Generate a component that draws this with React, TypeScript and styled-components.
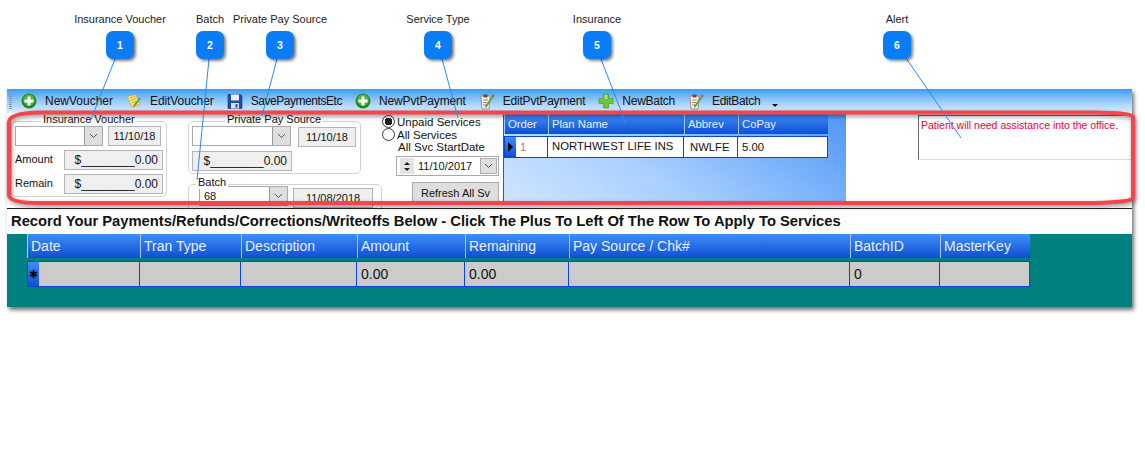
import styled, { createGlobalStyle } from 'styled-components';

const GlobalStyle = createGlobalStyle`
	html, body {
		margin: 0;
		padding: 0;
		background: #fff;
	}
	body {
		font-family: 'Liberation Sans', Arial, sans-serif;
		color: #111;
	}
`;

const Page = styled.div`
	position: relative;
	width: 1145px;
	height: 476px;
	padding: 89px 0 0 7px;
	box-sizing: border-box;
	overflow: hidden;
`;

const Window = styled.div`
	width: 1125px;
	height: 218px;
	display: flex;
	flex-direction: column;
	background: #fff;
	box-shadow: 2px 3px 4px rgba(0, 0, 0, 0.55);
`;

const Toolbar = styled.div`
	display: flex;
	align-items: center;
	flex: 0 0 24px;
	gap: 13px;
	font-size: 12px;
	background: linear-gradient(#3f9bf6, #8fc6f8 45%, #e2f0fc);
`;

const Gripper = styled.div`
	width: 3px;
	height: 15px;
	margin: 0 -4px 0 2px;
	background: repeating-linear-gradient(#7f97ad 0 1px, transparent 1px 2px);
`;

const ToolItem = styled.div<{ $tracking: number }>`
	display: flex;
	align-items: center;
	gap: 8px;
	letter-spacing: ${(p) => p.$tracking}px;
	white-space: nowrap;
`;

const Caret = styled.div`
	width: 0;
	height: 0;
	margin: 8px 0 0 -1px;
	border: 3px solid transparent;
	border-top-color: #111;
	border-bottom-width: 0;
`;

const Panel = styled.div`
	display: flex;
	flex: 0 0 96px;
	overflow: hidden;
	font-size: 11px;
	border-bottom: 1px solid #222;
	box-sizing: border-box;
`;

const FormArea = styled.div`
	display: flex;
	flex: 0 0 496px;
	padding-left: 4px;
	box-sizing: border-box;
`;

const Column = styled.div<{ $width: number; $gap?: number }>`
	display: flex;
	flex-direction: column;
	flex: 0 0 ${(p) => p.$width}px;
	width: ${(p) => p.$width}px;
	margin-left: ${(p) => p.$gap ?? 0}px;
`;

const Group = styled.div<{ $width: number; $height: number; $top: number; $padTop?: number }>`
	position: relative;
	flex: 0 0 auto;
	display: flex;
	flex-direction: column;
	gap: 4px;
	width: ${(p) => p.$width}px;
	height: ${(p) => p.$height}px;
	margin-top: ${(p) => p.$top}px;
	padding: ${(p) => p.$padTop ?? 4}px 3px 0;
	border: 1px solid #d2d2d2;
	border-radius: 5px;
	box-sizing: border-box;
`;

const Legend = styled.span<{ $left: number }>`
	position: absolute;
	top: -9px;
	left: ${(p) => p.$left}px;
	padding: 0 2px;
	line-height: 13px;
	background: #fff;
	white-space: nowrap;
`;

const Row = styled.div<{ $indent?: number; $gap?: number }>`
	display: flex;
	align-items: flex-start;
	gap: ${(p) => p.$gap ?? 5}px;
	padding-left: ${(p) => p.$indent ?? 0}px;
`;

const FieldLabel = styled.span`
	flex: 0 0 44px;
	line-height: 18px;
`;

const Combo = styled.div<{ $width: number }>`
	display: flex;
	justify-content: space-between;
	align-items: center;
	width: ${(p) => p.$width}px;
	height: 20px;
	padding-left: 4px;
	border: 1px solid #aaa;
	box-sizing: border-box;
	background: #fff;
`;

const ComboArrow = styled.div`
	display: flex;
	align-items: center;
	justify-content: center;
	width: 17px;
	height: 18px;
	border-left: 1px solid #999;
	background: #dfdfdf;
	color: #555;
`;

const ReadOnlyBox = styled.div<{ $width: number; $drop?: number }>`
	display: flex;
	align-items: center;
	justify-content: center;
	width: ${(p) => p.$width}px;
	height: 20px;
	margin-top: ${(p) => p.$drop ?? 0}px;
	border: 1px solid #b5b5b5;
	box-sizing: border-box;
	background: #efefef;
`;

const MoneyBox = styled.div<{ $width: number }>`
	width: ${(p) => p.$width}px;
	height: 20px;
	padding-right: 4px;
	border: 1px solid #b5b5b5;
	box-sizing: border-box;
	background: #efefef;
	font-size: 12px;
	line-height: 18px;
	text-align: right;
	white-space: nowrap;
`;

const ServiceColumn = styled.div`
	display: flex;
	flex-direction: column;
	flex: 1;
	padding-top: 2px;
	font-size: 11.5px;
`;

const RadioRow = styled.label`
	display: flex;
	align-items: center;
	gap: 2px;
	height: 13px;
	white-space: nowrap;
`;

const Radio = styled.span<{ $checked?: boolean }>`
	width: 13px;
	height: 13px;
	box-sizing: border-box;
	border: 1px solid #333;
	border-radius: 50%;
	background: ${(p) => (p.$checked ? 'radial-gradient(circle, #222 0 3.6px, #fff 4px)' : '#fff')};
`;

const StartLabel = styled.div`
	height: 13px;
	line-height: 13px;
	padding-left: 16px;
`;

const DatePicker = styled.div`
	display: flex;
	align-items: center;
	gap: 4px;
	width: 103px;
	height: 20px;
	margin: 2px 0 0 14px;
	padding-left: 3px;
	border: 1px solid #aaa;
	box-sizing: border-box;
	background: #fff;
	font-size: 11px;
`;

const Spinner = styled.div`
	display: flex;
	flex-direction: column;
	align-items: center;
	justify-content: center;
	gap: 3px;
	flex: 0 0 14px;
	height: 16px;
	background: #e4e4e4;
`;

const SpinTriangle = styled.span<{ $down?: boolean }>`
	width: 0;
	height: 0;
	border-left: 3px solid transparent;
	border-right: 3px solid transparent;
	border-top: ${(p) => (p.$down ? '3px solid #222' : '0')};
	border-bottom: ${(p) => (p.$down ? '0' : '3px solid #222')};
`;

const PickerArrow = styled(ComboArrow)`
	margin-left: auto;
	margin-right: 1px;
	height: 16px;
	border: 1px solid #aaa;
	box-sizing: border-box;
`;

const RefreshButton = styled.button`
	align-self: flex-end;
	width: 87px;
	height: 21px;
	margin: 6px 4px 0 0;
	padding: 0;
	border: 1px solid #aaa;
	background: #dedede;
	color: #111;
	font: 11px 'Liberation Sans', Arial, sans-serif;
`;

const InsuranceArea = styled.div`
	flex: 0 0 343px;
	height: 90px;
	padding-top: 1px;
	box-sizing: border-box;
	border-left: 1px solid #555;
	background: linear-gradient(35deg, #cfe5ff, #a9d0ff 40%, #4f97f5);
`;

const DataGrid = styled.div<{ $columns: string; $height: number; $font: number }>`
	display: grid;
	grid-template-columns: ${(p) => p.$columns};
	height: ${(p) => p.$height}px;
	font-size: ${(p) => p.$font}px;
`;

const HeaderCell = styled.div`
	display: flex;
	align-items: center;
	padding-left: 3px;
	box-sizing: border-box;
	border-left: 1px solid #a9c8f5;
	background: linear-gradient(#3f8dfb, #0e4fd2);
	color: #e6f0ff;
	white-space: nowrap;
`;

const BodyRow = styled(DataGrid)<{ $space: number }>`
	margin-top: ${(p) => p.$space}px;
`;

const BodyCell = styled.div<{ $bg: string }>`
	display: flex;
	align-items: center;
	padding-left: 4px;
	box-sizing: border-box;
	border: solid #0a45d6;
	border-width: 1px 1px 1px 0;
	background: ${(p) => p.$bg};
	white-space: nowrap;
`;

const OrderCell = styled(BodyCell)`
	padding-left: 0;
	border-left-width: 1px;
	color: #888;
`;

const PlanCell = styled(BodyCell)`
	padding-bottom: 3px;
`;

const AbbrevCell = styled(BodyCell)`
	padding-left: 6px;
`;

const RowMarker = styled.div`
	display: flex;
	align-items: center;
	justify-content: center;
	flex: 0 0 11px;
	align-self: stretch;
	margin-right: 4px;
	background: linear-gradient(#3f8dfb, #0e4fd2);
	color: #000;
	font-size: 11px;
`;

const MarkerArrow = styled.span`
	border-left: 5px solid #000;
	border-top: 5px solid transparent;
	border-bottom: 5px solid transparent;
`;

const AlertArea = styled.div`
	flex: 1;
	padding: 2px 0 0 72px;
`;

const AlertBox = styled.div`
	height: 45px;
	padding: 3px 0 0 2px;
	box-sizing: border-box;
	border: solid #666;
	border-width: 1px 0 1px 1px;
	border-bottom-color: #ddd;
	color: #f0003c;
	font-size: 10.5px;
	white-space: nowrap;
`;

const SectionTitle = styled.div`
	flex: 0 0 25px;
	padding-left: 4px;
	font-size: 14.75px;
	font-weight: bold;
	line-height: 25px;
	white-space: nowrap;
`;

const TealArea = styled.div`
	flex: 1;
	padding-left: 20px;
	background: #008080;
`;

const Callout = styled.div<{ $x: number }>`
	position: absolute;
	top: 12px;
	left: ${(p) => p.$x - 70}px;
	width: 140px;
	display: flex;
	flex-direction: column;
	align-items: center;
	gap: 5px;
	font-size: 11px;
	line-height: 14px;
	color: #222;
`;

const Badge = styled.div`
	display: flex;
	align-items: center;
	justify-content: center;
	width: 28px;
	height: 28px;
	border-radius: 7px;
	background: #0a7cf5;
	box-shadow: 2px 2px 3px rgba(0, 0, 0, 0.5);
	color: #fff;
	font-size: 10.5px;
	font-weight: bold;
`;

const Overlay = styled.svg`
	position: absolute;
	top: 0;
	left: 0;
	pointer-events: none;
`;

const HighlightPath = styled.path`
	filter: drop-shadow(1px 2px 2px rgba(0, 0, 0, 0.45));
`;

const PlusCircleIcon = () => (
	<svg width='16' height='16' viewBox='0 0 16 16'>
		<circle cx='8' cy='8' r='7.5' fill='#1f8a1f' />
		<circle cx='8' cy='7' r='5.8' fill='#49b53d' />
		<path d='M6.5 3.5h3v3h3v3h-3v3h-3v-3h-3v-3h3z' fill='#fff' />
	</svg>
);

const NoteIcon = () => (
	<svg width='16' height='16' viewBox='0 0 16 16'>
		<path d='M1 3.5l8.5-2 5 9.5-8.5 3.5z' fill='#f6e27a' stroke='#c9a93c' strokeWidth='0.8' />
		<path d='M3.5 5l6-1.5M4.5 7.5l6-2M6 10l4.5-1.7' stroke='#b89a35' strokeWidth='0.7' />
		<path d='M7.5 12l6-7.5 1.5 1.2-6 7.5-2 .6z' fill='#5aa845' />
	</svg>
);

const SaveIcon = () => (
	<svg width='16' height='17' viewBox='0 0 16 17'>
		<path d='M1 1.5h12.5l1.5 1.5v12.5H1z' fill='#1d4fa8' stroke='#123574' strokeWidth='0.6' />
		<rect x='4' y='1.5' width='8' height='6' fill='#e8eef8' />
		<rect x='4' y='10' width='8' height='5.5' fill='#dfe3ea' />
		<rect x='8.5' y='11' width='2' height='3.5' fill='#1d4fa8' />
	</svg>
);

const PlusIcon = () => (
	<svg width='16' height='16' viewBox='0 0 16 16'>
		<path d='M5.5 1h5v4.5H15v5h-4.5V15h-5v-4.5H1v-5h4.5z' fill='#6cc63a' stroke='#4b9b26' strokeWidth='0.7' />
		<path d='M6.5 2h3v4h-3z' fill='#a9e57c' />
	</svg>
);

const ClipboardIcon = () => (
	<svg width='16' height='17' viewBox='0 0 16 17'>
		<path d='M2 3h9l-1 13H3z' fill='#fbfbfb' stroke='#8b7a70' strokeWidth='0.8' />
		<path d='M4.5 1.5h4v3h-4z' fill='#8a3a30' />
		<path d='M4 7h5M4 9.5h4M4 12h3' stroke='#b04a3a' strokeWidth='0.8' />
		<path d='M6 13l7-10 1.7 1.2-7 10-2 .6z' fill='#5aa845' />
		<path d='M13 3l.8-1.4 1.7 1.2-.8 1.4z' fill='#d8352a' />
	</svg>
);

const Chevron = () => (
	<svg width='9' height='6' viewBox='0 0 9 6'>
		<path d='M1 1l3.5 3.5L8 1' fill='none' stroke='currentColor' strokeWidth='1' />
	</svg>
);

const tools = [
	{ label: 'NewVoucher', tracking: 0, icon: <PlusCircleIcon /> },
	{ label: 'EditVoucher', tracking: -0.1, icon: <NoteIcon /> },
	{ label: 'SavePaymentsEtc', tracking: -0.45, icon: <SaveIcon /> },
	{ label: 'NewPvtPayment', tracking: -0.15, icon: <PlusCircleIcon /> },
	{ label: 'EditPvtPayment', tracking: -0.2, icon: <ClipboardIcon /> },
	{ label: 'NewBatch', tracking: -0.25, icon: <PlusIcon /> },
	{ label: 'EditBatch', tracking: -0.35, icon: <ClipboardIcon /> },
];

const callouts = [
	{ n: 1, x: 120, label: 'Insurance Voucher' },
	{ n: 2, x: 210, label: 'Batch' },
	{ n: 3, x: 280, label: 'Private Pay Source' },
	{ n: 4, x: 438, label: 'Service Type' },
	{ n: 5, x: 597, label: 'Insurance' },
	{ n: 6, x: 897, label: 'Alert' },
];

const leaders = [
	[115, 59, 90, 122],
	[209, 59, 197, 180],
	[277, 59, 262, 116],
	[442, 59, 458, 118],
	[601, 59, 626, 124],
	[906, 58, 961, 138],
];

const paymentColumns = '113px 101px 116px 108px 104px 281px 90px 90px';
const paymentHeaders = ['Date', 'Tran Type', 'Description', 'Amount', 'Remaining', 'Pay Source / Chk#', 'BatchID', 'MasterKey'];

const App = () => (
	<Page>
		<GlobalStyle />
		<Window>
			<Toolbar>
				<Gripper />
				{tools.map((tool) => (
					<ToolItem key={tool.label} $tracking={tool.tracking}>
						{tool.icon}
						<span>{tool.label}</span>
					</ToolItem>
				))}
				<Caret />
			</Toolbar>
			<Panel>
				<FormArea>
					<Column $width={156}>
						<Group $width={156} $height={76} $top={8}>
							<Legend $left={29}>Insurance Voucher</Legend>
							<Row>
								<Combo $width={88}>
									<span />
									<ComboArrow><Chevron /></ComboArrow>
								</Combo>
								<ReadOnlyBox $width={53}>11/10/18</ReadOnlyBox>
							</Row>
							<Row>
								<FieldLabel>Amount</FieldLabel>
								<MoneyBox $width={99}>$________0.00</MoneyBox>
							</Row>
							<Row>
								<FieldLabel>Remain</FieldLabel>
								<MoneyBox $width={99}>$________0.00</MoneyBox>
							</Row>
						</Group>
					</Column>
					<Column $width={194} $gap={21}>
						<Group $width={173} $height={53} $top={8}>
							<Legend $left={36}>Private Pay Source</Legend>
							<Row $gap={7}>
								<Combo $width={99}>
									<span />
									<ComboArrow><Chevron /></ComboArrow>
								</Combo>
								<ReadOnlyBox $width={58} $drop={1}>11/10/18</ReadOnlyBox>
							</Row>
							<MoneyBox $width={100}>$________0.00</MoneyBox>
						</Group>
						<Group $width={194} $height={40} $top={10} $padTop={1}>
							<Legend $left={7}>Batch</Legend>
							<Row $indent={7}>
								<Combo $width={89}>
									<span>68</span>
									<ComboArrow><Chevron /></ComboArrow>
								</Combo>
								<ReadOnlyBox $width={80} $drop={2}>11/08/2018</ReadOnlyBox>
							</Row>
						</Group>
					</Column>
					<ServiceColumn>
						<RadioRow><Radio $checked />Unpaid Services</RadioRow>
						<RadioRow><Radio />All Services</RadioRow>
						<StartLabel>All Svc StartDate</StartLabel>
						<DatePicker>
							<Spinner>
								<SpinTriangle />
								<SpinTriangle $down />
							</Spinner>
							<span>11/10/2017</span>
							<PickerArrow><Chevron /></PickerArrow>
						</DatePicker>
						<RefreshButton>Refresh All Sv</RefreshButton>
					</ServiceColumn>
				</FormArea>
				<InsuranceArea>
					<DataGrid $columns='44px 136px 54px 90px' $height={20} $font={11.3}>
						{['Order', 'Plan Name', 'Abbrev', 'CoPay'].map((title) => (
							<HeaderCell key={title}>{title}</HeaderCell>
						))}
					</DataGrid>
					<BodyRow $columns='44px 136px 54px 90px' $height={22} $font={11.3} $space={2}>
						<OrderCell $bg='#fff'>
							<RowMarker><MarkerArrow /></RowMarker>1
						</OrderCell>
						<PlanCell $bg='#fff'>NORTHWEST LIFE INS</PlanCell>
						<AbbrevCell $bg='#fff'>NWLFE</AbbrevCell>
						<BodyCell $bg='#fff'>5.00</BodyCell>
					</BodyRow>
				</InsuranceArea>
				<AlertArea>
					<AlertBox>Patient will need assistance into the office.</AlertBox>
				</AlertArea>
			</Panel>
			<SectionTitle>Record Your Payments/Refunds/Corrections/Writeoffs Below - Click The Plus To Left Of The Row To Apply To Services</SectionTitle>
			<TealArea>
				<DataGrid $columns={paymentColumns} $height={24} $font={14}>
					{paymentHeaders.map((title) => (
						<HeaderCell key={title}>{title}</HeaderCell>
					))}
				</DataGrid>
				<BodyRow $columns={paymentColumns} $height={26} $font={14} $space={3}>
					<OrderCell $bg='#cbcbcb'>
						<RowMarker>✱</RowMarker>
					</OrderCell>
					<BodyCell $bg='#cbcbcb' />
					<BodyCell $bg='#cbcbcb' />
					<BodyCell $bg='#cbcbcb'>0.00</BodyCell>
					<BodyCell $bg='#cbcbcb'>0.00</BodyCell>
					<BodyCell $bg='#cbcbcb' />
					<BodyCell $bg='#cbcbcb'>0</BodyCell>
					<BodyCell $bg='#cbcbcb' />
				</BodyRow>
			</TealArea>
		</Window>
		<Overlay width='1145' height='476' viewBox='0 0 1145 476'>
			<HighlightPath
				d='M9 122 Q9 113 40 112.5 L1095 112.5 Q1133 113 1133 117 L1133 198 Q1133 202 1095 203 L40 203 Q9 203 9 195 Z'
				fill='none'
				stroke='#f7434c'
				strokeWidth='4'
			/>
			{leaders.map(([x1, y1, x2, y2]) => (
				<line key={x1} x1={x1} y1={y1} x2={x2} y2={y2} stroke='#2a8cf0' strokeWidth='1' />
			))}
		</Overlay>
		{callouts.map((callout) => (
			<Callout key={callout.n} $x={callout.x}>
				<span>{callout.label}</span>
				<Badge>{callout.n}</Badge>
			</Callout>
		))}
	</Page>
);

export default App;
